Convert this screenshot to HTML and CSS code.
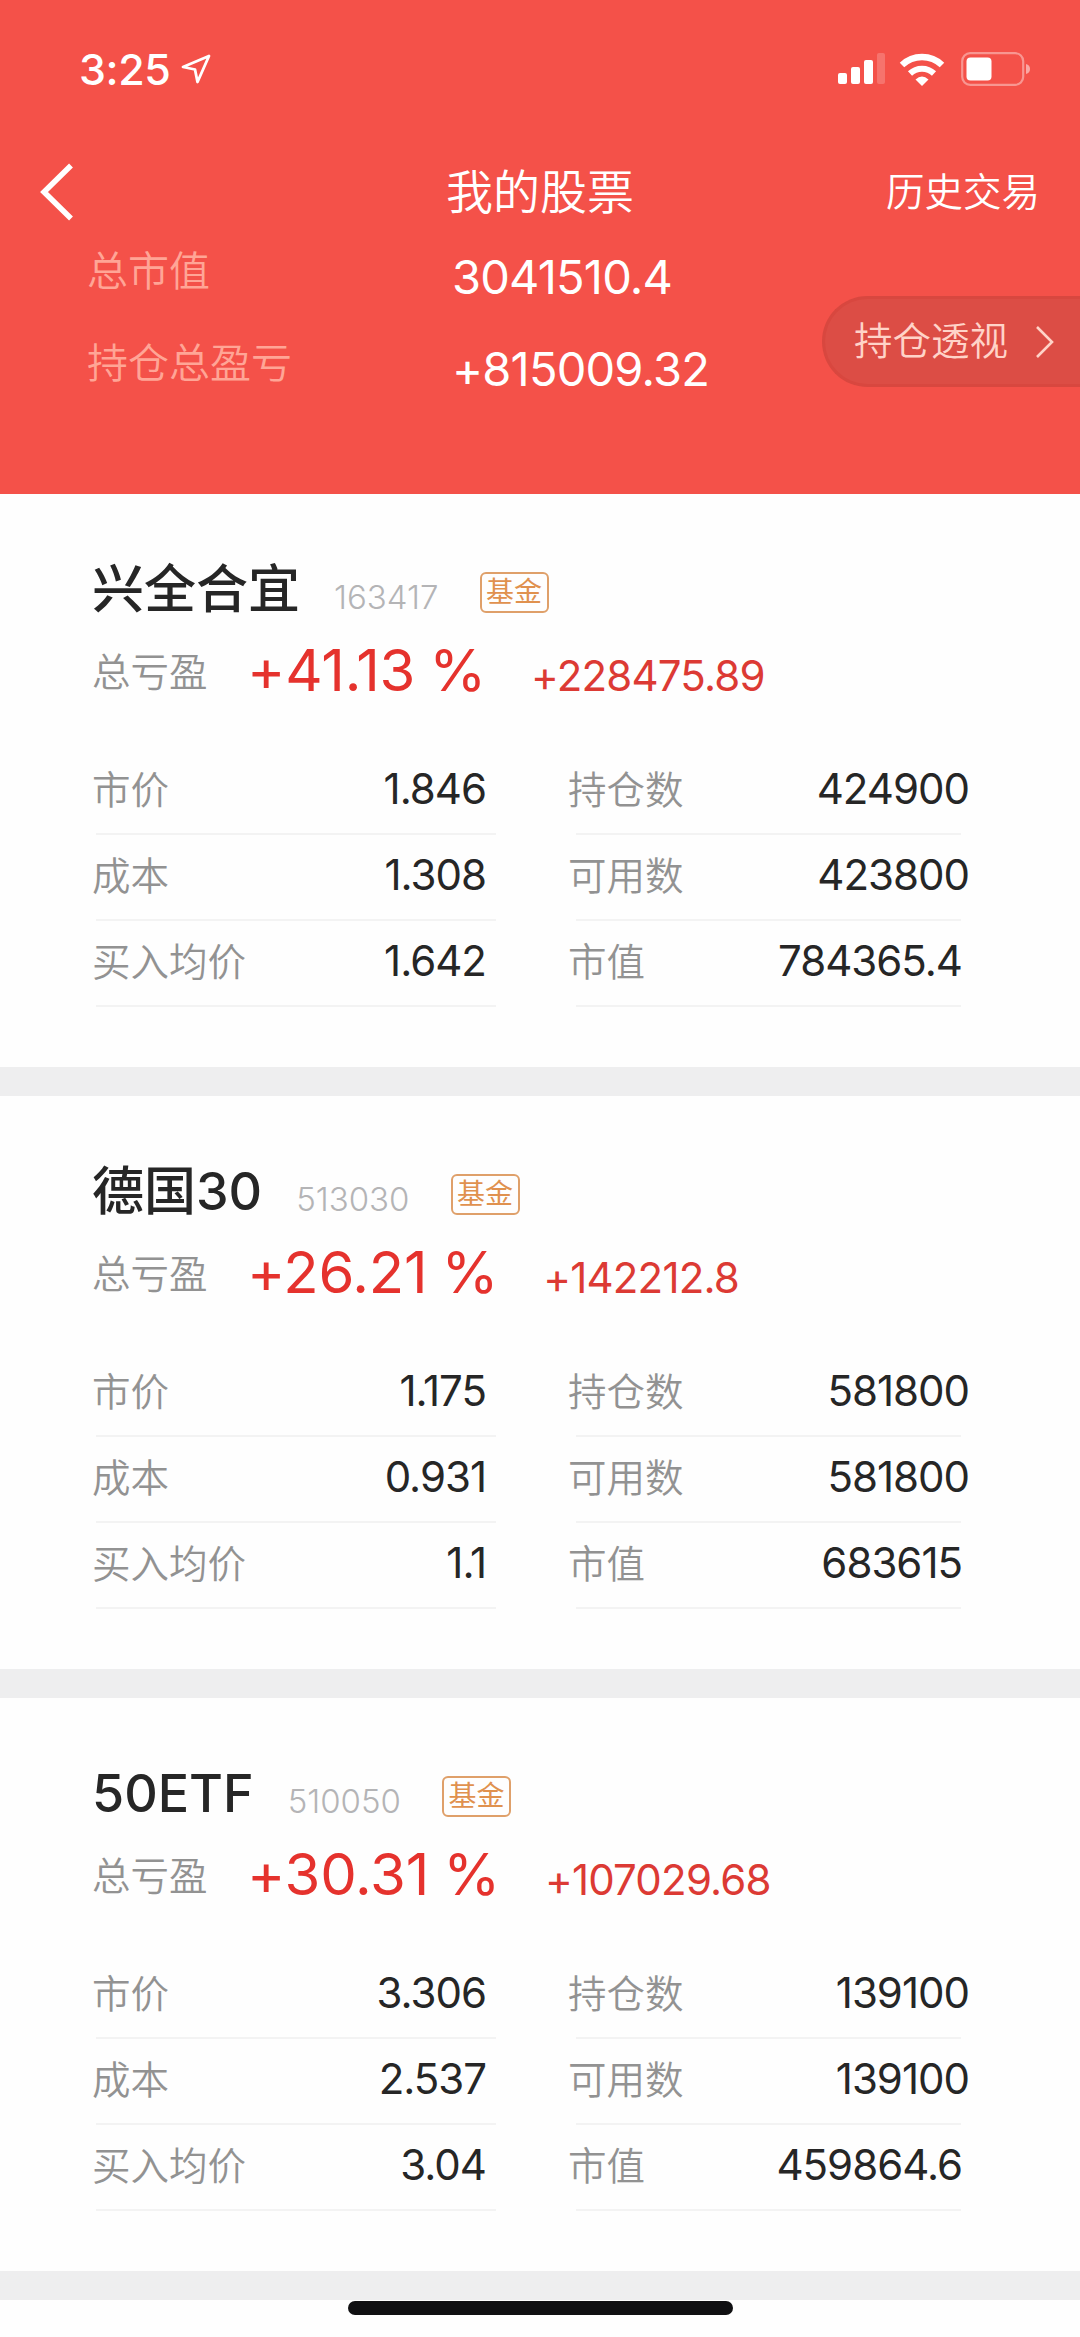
FILE: index.html
```
<!DOCTYPE html>
<html lang="zh-CN">
<head>
  <meta charset="UTF-8">
  <title>我的股票</title>
  <meta name="viewport" content="width=device-width, initial-scale=1.0">
  <link rel="stylesheet" href="styles.css">
</head>
<body>
  <header class="header">
    <div class="status-bar">
      <span class="time">3:25</span>
      <svg class="location" width="32" height="32" viewBox="0 0 32 32" fill="none" stroke="#fff" stroke-width="2.8" stroke-linejoin="round">
        <path d="M29 3 L3 14 L15 16.5 L17.5 29 Z"/>
      </svg>
      <svg class="signal" width="48" height="32" viewBox="0 0 48 32" fill="#fff">
        <rect x="0" y="20" width="9" height="11" rx="2"/>
        <rect x="13" y="14" width="9" height="17" rx="2"/>
        <rect x="26" y="7" width="9" height="24" rx="2"/>
        <rect x="39" y="0" width="8" height="31" rx="2" opacity="0.2"/>
      </svg>
      <svg class="wifi" width="46" height="34" viewBox="0 0 46 34">
        <path d="M3 13 A29 29 0 0 1 43 13" fill="none" stroke="#fff" stroke-width="6.5"/>
        <path d="M11 21.5 A17.5 17.5 0 0 1 35 21.5" fill="none" stroke="#fff" stroke-width="6"/>
        <path d="M16.5 27.5 Q23 21.5 29.5 27.5 L23 34 Z" fill="#fff"/>
      </svg>
      <svg class="battery" width="70" height="34" viewBox="0 0 70 34">
        <rect x="1.2" y="1.2" width="61" height="31.6" rx="8" fill="none" stroke="#fff" stroke-opacity="0.4" stroke-width="2.2"/>
        <rect x="5.5" y="5.5" width="25" height="23" rx="4" fill="#fff"/>
        <path d="M65 12 Q69 13 69 17 Q69 21 65 22 Z" fill="#fff" fill-opacity="0.5"/>
      </svg>
    </div>

    <nav class="nav">
      <svg class="back" width="36" height="58" viewBox="0 0 36 58" fill="none" stroke="#fff" stroke-width="5.5">
        <path d="M31 2.5 L4 29 L31 55.5"/>
      </svg>
      <h1>我的股票</h1>
      <span class="history">历史交易</span>
    </nav>

    <div class="summary">
      <div class="summary-row">
        <span class="summary-label">总市值</span>
        <span class="summary-value">3041510.4</span>
      </div>
      <div class="summary-row">
        <span class="summary-label">持仓总盈亏</span>
        <span class="summary-value">+815009.32</span>
      </div>
    </div>

    <div class="insight">
      <span>持仓透视</span>
      <svg width="20" height="34" viewBox="0 0 20 34" fill="none" stroke="#ffd3c8" stroke-width="2.6">
        <path d="M2 2 L17 17 L2 32"/>
      </svg>
    </div>
  </header>

  <main>
    <section class="card">
      <div class="card-title">
        <h2>兴全合宜</h2>
        <span class="code">163417</span>
        <span class="tag">基金</span>
      </div>
      <div class="profit">
        <span class="profit-label">总亏盈</span>
        <span class="percent">+41.13 %</span>
        <span class="amount">+228475.89</span>
      </div>
      <div class="details">
        <ul class="left">
          <li><span>市价</span><b>1.846</b></li>
          <li><span>成本</span><b>1.308</b></li>
          <li><span>买入均价</span><b>1.642</b></li>
        </ul>
        <ul class="right">
          <li><span>持仓数</span><b>424900</b></li>
          <li><span>可用数</span><b>423800</b></li>
          <li><span>市值</span><b>784365.4</b></li>
        </ul>
      </div>
    </section>

    <section class="card">
      <div class="card-title">
        <h2>德国30</h2>
        <span class="code">513030</span>
        <span class="tag">基金</span>
      </div>
      <div class="profit">
        <span class="profit-label">总亏盈</span>
        <span class="percent">+26.21 %</span>
        <span class="amount">+142212.8</span>
      </div>
      <div class="details">
        <ul class="left">
          <li><span>市价</span><b>1.175</b></li>
          <li><span>成本</span><b>0.931</b></li>
          <li><span>买入均价</span><b>1.1</b></li>
        </ul>
        <ul class="right">
          <li><span>持仓数</span><b>581800</b></li>
          <li><span>可用数</span><b>581800</b></li>
          <li><span>市值</span><b>683615</b></li>
        </ul>
      </div>
    </section>

    <section class="card">
      <div class="card-title">
        <h2>50ETF</h2>
        <span class="code">510050</span>
        <span class="tag">基金</span>
      </div>
      <div class="profit">
        <span class="profit-label">总亏盈</span>
        <span class="percent">+30.31 %</span>
        <span class="amount">+107029.68</span>
      </div>
      <div class="details">
        <ul class="left">
          <li><span>市价</span><b>3.306</b></li>
          <li><span>成本</span><b>2.537</b></li>
          <li><span>买入均价</span><b>3.04</b></li>
        </ul>
        <ul class="right">
          <li><span>持仓数</span><b>139100</b></li>
          <li><span>可用数</span><b>139100</b></li>
          <li><span>市值</span><b>459864.6</b></li>
        </ul>
      </div>
    </section>
  </main>

  <div class="home-indicator"></div>
</body>
</html>
```

FILE: styles.css
```
* {
  box-sizing: border-box;
}

body {
  margin: 0;
  height: 2337px;
  overflow: hidden;
  position: relative;
  background: #fefefe;
  color: #262626;
  font-family: Inter, 'Noto Sans CJK SC', sans-serif;
}

h1, h2, ul {
  margin: 0;
  padding: 0;
}

/* Header */
.header {
  position: relative;
  height: 494px;
  background: #f45149;
  color: #fff;
}

.status-bar {
  display: flex;
  align-items: center;
  height: 137px;
  padding: 0 49px 0 79px;
}

.time {
  width: 101px;
  font-size: 43px;
  font-weight: 550;
  letter-spacing: -0.4px;
}

.signal {
  margin-left: auto;
}

.wifi {
  margin-left: 13px;
}

.battery {
  margin-left: 16px;
}

.nav {
  display: grid;
  grid-template-columns: 1fr auto 1fr;
  align-items: center;
  height: 110px;
  padding: 0 40px;
}

.nav h1 {
  font-size: 47px;
  font-weight: 350;
  line-height: 60px;
}

.history {
  justify-self: end;
  padding-bottom: 6px;
  font-size: 38.5px;
  font-weight: 350;
}

.summary {
  margin-top: -20px;
}

.summary-row {
  display: flex;
  align-items: center;
  height: 92px;
  padding-left: 87px;
}

.summary-label {
  width: 365px;
  padding-bottom: 10px;
  font-size: 41px;
  font-weight: 350;
  color: #ffa596;
}

.summary-value {
  padding-top: 6px;
  font-size: 47px;
  font-weight: 370;
  letter-spacing: -0.8px;
}

.insight {
  position: absolute;
  top: 296px;
  right: 0;
  width: 258px;
  height: 91px;
  display: flex;
  align-items: center;
  justify-content: space-between;
  padding: 0 25px 0 29px;
  border: 3px solid #d8473f;
  border-right: none;
  border-radius: 46px 0 0 46px;
  background: #dc4d45;
  color: #ffd3c8;
  font-size: 38.5px;
  font-weight: 350;
}

.insight span {
  padding-bottom: 8px;
}

/* Holdings */
.card {
  height: 602px;
  padding: 66px 0 0 92px;
  border-bottom: 29px solid #eeeeef;
}

.card-title {
  display: flex;
  align-items: center;
  height: 60px;
}

.card-title h2 {
  font-size: 52px;
  font-weight: 500;
  line-height: 60px;
}

.code {
  margin-left: 34px;
  padding-top: 13px;
  font-size: 33px;
  font-weight: 300;
  color: #b4b4b6;
}

.tag {
  width: 69px;
  height: 41px;
  margin: 4px 0 0 41px;
  border: 2px solid #dfa06a;
  border-radius: 6px;
  color: #e0914e;
  font-size: 28px;
  line-height: 36px;
  text-align: center;
}

.profit {
  display: flex;
  align-items: baseline;
  height: 88px;
  line-height: 100px;
}

.profit-label {
  align-self: flex-start;
  width: 155px;
  font-size: 38.5px;
  font-weight: 350;
  line-height: 104px;
  color: #929292;
}

.percent {
  font-size: 58px;
  font-weight: 380;
  letter-spacing: -0.2px;
  word-spacing: -2px;
  color: #e5322d;
}

.amount {
  margin-left: 45px;
  font-size: 42px;
  font-weight: 370;
  letter-spacing: -0.8px;
  color: #dc3a34;
}

.details {
  display: flex;
  gap: 80px;
  margin-top: 41px;
  padding-left: 4px;
}

.details ul {
  list-style: none;
}

.left {
  width: 400px;
}

.right {
  width: 385px;
}

.details li {
  display: flex;
  align-items: center;
  justify-content: space-between;
  height: 86px;
  padding-bottom: 6px;
  border-bottom: 2px solid #f3f3f3;
}

.details span {
  margin-left: -4px;
  padding-bottom: 3px;
  font-size: 38.5px;
  font-weight: 350;
  color: #929292;
}

.right span {
  margin-left: -8px;
}

.details b {
  margin-right: 10px;
  font-size: 42px;
  font-weight: 370;
  letter-spacing: -1px;
}

.right b {
  margin-right: -8px;
}

.right li:last-child b {
  margin-right: -1px;
}

.home-indicator {
  position: absolute;
  left: 348px;
  bottom: 22px;
  width: 385px;
  height: 14px;
  border-radius: 7px;
  background: #101012;
}
```
